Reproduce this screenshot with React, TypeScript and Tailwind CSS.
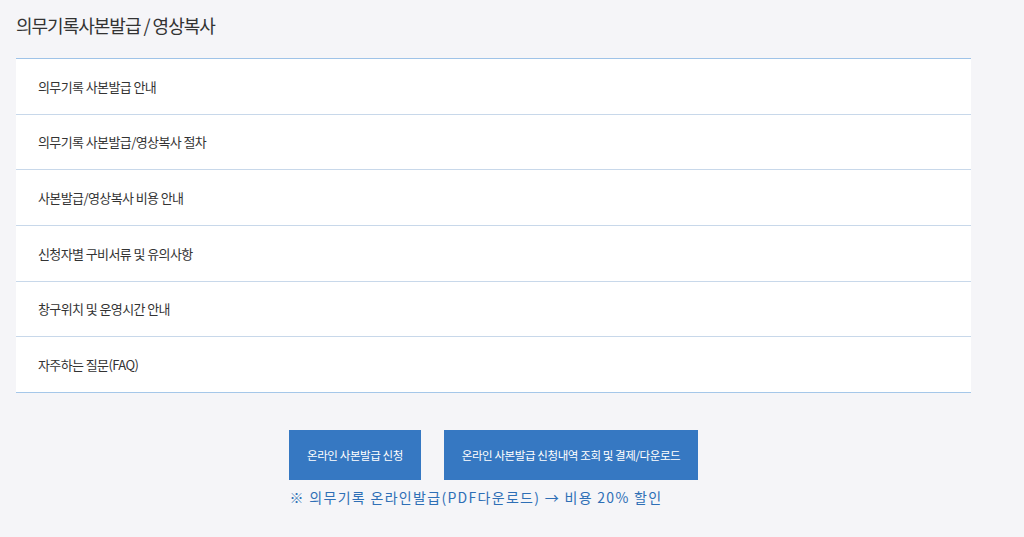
const items = [
  "의무기록 사본발급 안내",
  "의무기록 사본발급/영상복사 절차",
  "사본발급/영상복사 비용 안내",
  "신청자별 구비서류 및 유의사항",
  "창구위치 및 운영시간 안내",
  "자주하는 질문(FAQ)",
];

export default function App() {
  return (
    <div className="min-h-[537px] w-[1024px] bg-[#f5f5f8] pl-4 font-['Noto_Sans_CJK_KR','Noto_Sans',sans-serif] text-[#333]">
      <h1 className="pt-[12px] text-[18px] leading-[26px] tracking-[-1px] text-[#333]">
        의무기록사본발급 / 영상복사
      </h1>

      <ul className="mt-[20px] w-[955px] border-t border-[#9fc3e8] bg-white">
        {items.map((label, i) => (
          <li
            key={label}
            className={
              i === items.length - 1
                ? "flex h-[55.7px] items-center border-b border-[#a5c7e9] pl-[22px] text-[13px] tracking-[-0.6px]"
                : "flex h-[55.7px] items-center border-b border-[#c8d8ea] pl-[22px] text-[13px] tracking-[-0.6px]"
            }
          >
            {label}
          </li>
        ))}
      </ul>

      <div className="flex w-[955px] flex-col items-center pt-[37px]">
        <div className="flex gap-[23px]">
          <button
            type="button"
            className="h-[50px] w-[132px] bg-[#3678c2] text-[11.5px] tracking-[-0.4px] text-white"
          >
            온라인 사본발급 신청
          </button>
          <button
            type="button"
            className="h-[50px] w-[254px] bg-[#3678c2] text-[11.5px] tracking-[-0.4px] text-white"
          >
            온라인 사본발급 신청내역 조회 및 결제/다운로드
          </button>
        </div>
        <p className="ml-[-35px] mt-[6px] text-[14px] leading-[22px] tracking-[1.3px] text-[#2e6fb6]">
          ※ 의무기록 온라인발급(PDF다운로드) → 비용 20% 할인
        </p>
      </div>
    </div>
  );
}
